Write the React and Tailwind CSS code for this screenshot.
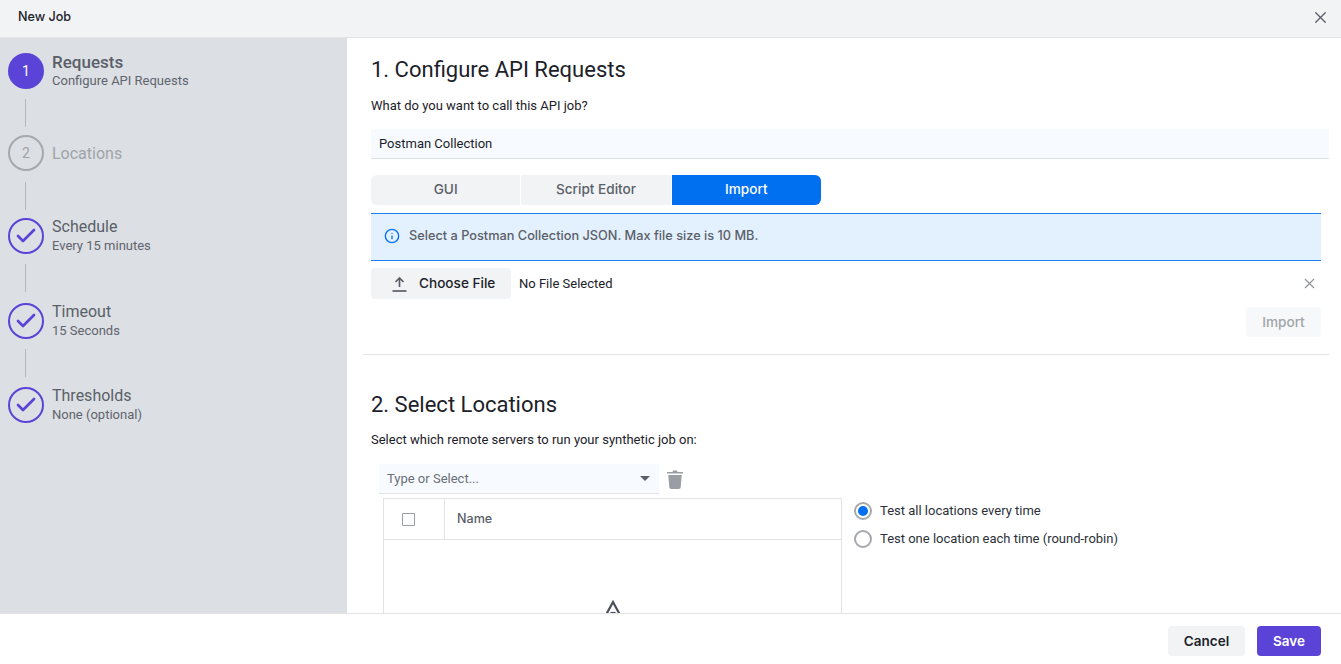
import { X, Check, Info } from "lucide-react";

const STEPS = [
  { id: 1, name: "Requests", sub: "Configure API Requests", state: "active", line: "mt-[10px] mb-[8px]" },
  { id: 2, name: "Locations", state: "pending", line: "mt-[11px] mb-[8px]" },
  { id: 3, name: "Schedule", sub: "Every 15 minutes", state: "done", line: "mt-[10px] mb-[11px]" },
  { id: 4, name: "Timeout", sub: "15 Seconds", state: "done", line: "mt-[10px] mb-[10px]" },
  { id: 5, name: "Thresholds", sub: "None (optional)", state: "done" },
];

const StepCircle = ({ step }) => {
  if (step.state === "active") {
    return <div className="w-9 h-9 rounded-full bg-[#5a43d6] text-white flex items-center justify-center text-sm shrink-0">{step.id}</div>;
  }
  if (step.state === "pending") {
    return <div className="w-9 h-9 rounded-full border-2 border-[#a5a9ad] text-[#a0a4a9] flex items-center justify-center text-sm shrink-0">{step.id}</div>;
  }
  return (
    <div className="w-9 h-9 rounded-full border-2 border-[#5a43d6] flex items-center justify-center shrink-0">
      <Check size={24} strokeWidth={2.7} className="text-[#5a43d6]" />
    </div>
  );
};

const Sidebar = () => (
  <div className="w-[347px] shrink-0 bg-[#dcdfe3] pl-2 pt-[15px] [font-family:Roboto,sans-serif]">
    {STEPS.map((step, i) => (
      <div key={step.id}>
        <div className="flex items-center gap-2 h-9">
          <StepCircle step={step} />
          <div className={step.state === "active" ? "-mt-[1px]" : step.state === "done" ? "-mt-[2px]" : "mt-[1px]"}>
            <div className={`leading-[20px] ${step.state === "pending" ? "text-[#a0a4a9]" : "text-[#5a5f69]"} ${step.state === "active" ? "font-medium text-[17px]" : "text-[16px]"}`}>{step.name}</div>
            {step.sub && <div className="text-[13px] leading-[17px] text-[#5f646e]">{step.sub}</div>}
          </div>
        </div>
        {i < STEPS.length - 1 && <div className={`w-px h-7 bg-[#b4b7bb] ml-[17px] ${step.line}`} />}
      </div>
    ))}
  </div>
);

const TabButton = ({ label, active, className }) => (
  <div className={`w-[149.33px] h-[30px] pb-[1px] flex items-center justify-center text-[13.6px] font-medium ${active ? "bg-[#0070f0] text-white" : "bg-[#f1f3f5] text-[#5a5f69]"} ${className}`}>
    {label}
  </div>
);

const Content = () => (
  <div className="flex-1 overflow-hidden relative [font-family:Inter,sans-serif] text-[#1c2129]">
    <div className="pl-6 pr-5">
      <h2 className="text-[22px] leading-[28px] mt-[18px] [font-family:Roboto,sans-serif]">1. Configure API Requests</h2>
      <p className="text-[13px] leading-5 mt-[12px] [font-family:Roboto,sans-serif]">What do you want to call this API job?</p>
      <div className="h-[30px] -mr-[8px] mt-[13px] bg-[#f7fbff] border-b border-[#dcdfe3] pl-2 flex items-center text-[13px] [font-family:Roboto,sans-serif]">Postman Collection</div>

      <div className="flex mt-[16px] gap-px">
        <TabButton label="GUI" className="rounded-l-md" />
        <TabButton label="Script Editor" />
        <TabButton label="Import" active className="rounded-r-md" />
      </div>

      <div className="mt-[8px] h-[48px] pb-[2px] bg-[#e3f0fd] border-y border-[#1a80f5] flex items-center pl-[13px] gap-[9px] text-[12.75px] font-medium text-[#5a5f69]">
        <Info size={16} className="text-[#0070f0]" />
        Select a Postman Collection JSON. Max file size is 10 MB.
      </div>

      <div className="flex items-center mt-[7px] h-[31px]">
        <div className="w-[140px] h-full bg-[#f1f3f5] rounded flex items-center pl-[21px] gap-[12px] text-[13.6px] font-medium">
          <svg width="15" height="16" viewBox="0 0 15 16" fill="none" stroke="#5a5f69" strokeWidth="1.7"><path d="M7.5 11V2M3.5 6l4-4 4 4" /><path d="M0.5 15h14" /></svg>
          Choose File
        </div>
        <span className="ml-2 text-[13px] [font-family:Roboto,sans-serif]">No File Selected</span>
        <X size={17} strokeWidth={1.5} className="ml-auto mr-[3px] text-[#8c9096]" />
      </div>

      <div className="flex justify-end mt-[8px]">
        <div className="w-[75px] h-[30px] bg-[#f7f8fa] rounded text-[#a0a4a9] text-[13.6px] font-medium flex items-center justify-center">Import</div>
      </div>
    </div>

    <div className="h-px bg-[#e2e3e5] ml-4 mr-3 mt-[17px]" />

    <div className="pl-6">
      <h2 className="text-[22px] leading-[28px] mt-[36px] [font-family:Roboto,sans-serif]">2. Select Locations</h2>
      <p className="text-[13px] leading-5 mt-[11px] [font-family:Roboto,sans-serif]">Select which remote servers to run your synthetic job on:</p>
      <div className="flex items-center mt-[14px] ml-[8px]">
        <div className="w-[280px] h-[30px] bg-[#f7fbff] border-b border-[#e2e3e5] pl-2 pr-[9px] flex items-center justify-between text-[13px] text-[#6a6f78] [font-family:Roboto,sans-serif]">
          Type or Select...
          <span className="w-0 h-0 border-x-[5px] border-x-transparent border-t-[5px] border-t-[#5a5f69]" />
        </div>
        <svg width="16" height="20" viewBox="0 0 16 20" fill="#9a9da3" className="ml-2"><path d="M0 3h5.5l.6-1.5h3.8L10.500 3H16v1.600H0z" /><path d="M1.300 6h13.400l-1 12.300c-.1.900-.8 1.700-1.800 1.700H4.100c-1 0-1.700-.8-1.800-1.700z" /></svg>
      </div>
      <div className="flex">
        <div className="ml-[12px] mt-[4px] w-[459px] h-[160px] border border-[#e2e3e5] border-b-0 shrink-0">
          <div className="flex h-[41px] border-b border-[#e2e3e5] items-center">
            <div className="w-[61px] h-full border-r border-[#e2e3e5] flex items-center pl-[18px]">
              <span className="w-[13px] h-[13px] border border-[#9a9da3] rounded-[1px]" />
            </div>
            <span className="ml-3 text-[12.6px] font-medium text-[#5a5f69]">Name</span>
          </div>
          <div className="flex justify-center pt-[60px]">
            <svg width="16" height="16" viewBox="0 0 16 16" fill="none" stroke="#4a4f59" strokeWidth="2.2"><path d="M1.500 14L8 2l6.500 12" /><path d="M5.500 13h5" /></svg>
          </div>
        </div>
        <div className="ml-[12px] mt-[3px] text-[13px] text-[#2c3139] [font-family:Roboto,sans-serif]">
          <label className="flex items-center gap-2 h-7">
            <span className="w-[18px] h-[18px] rounded-full border-2 border-[#a5a9ad] flex items-center justify-center">
              <span className="w-[10px] h-[10px] rounded-full bg-[#0070f0]" />
            </span>
            Test all locations every time
          </label>
          <label className="flex items-center gap-2 h-7">
            <span className="w-[18px] h-[18px] rounded-full border-2 border-[#a5a9ad]" />
            Test one location each time (round-robin)
          </label>
        </div>
      </div>
    </div>
  </div>
);

export default function App() {
  return (
    <div className="w-[1341px] h-[664px] flex flex-col bg-white overflow-hidden">
      <div className="h-[38px] shrink-0 bg-[#f1f3f5] border-b border-[#e2e3e5] flex items-center justify-between pl-[18px] pr-[11px] text-[12.6px] font-medium text-[#1c2129] [font-family:Inter,sans-serif]">
        <span className="-mt-[3px]">New Job</span>
        <X size={19} strokeWidth={1.7} className="text-[#5a5f69] -mt-[3px]" />
      </div>
      <div className="flex flex-1 min-h-0">
        <Sidebar />
        <Content />
      </div>
      <div className="h-[51px] shrink-0 relative z-10 bg-white border-t border-[#e2e3e5] pt-1 flex items-center justify-end gap-3 pr-5 text-[13.5px] font-semibold [font-family:Inter,sans-serif]">
        <div className="w-[77px] h-[30px] rounded bg-[#f1f3f5] text-[#1c2129] flex items-center justify-center">Cancel</div>
        <div className="w-[64px] h-[30px] rounded bg-[#5a43d6] text-white flex items-center justify-center">Save</div>
      </div>
    </div>
  );
}
